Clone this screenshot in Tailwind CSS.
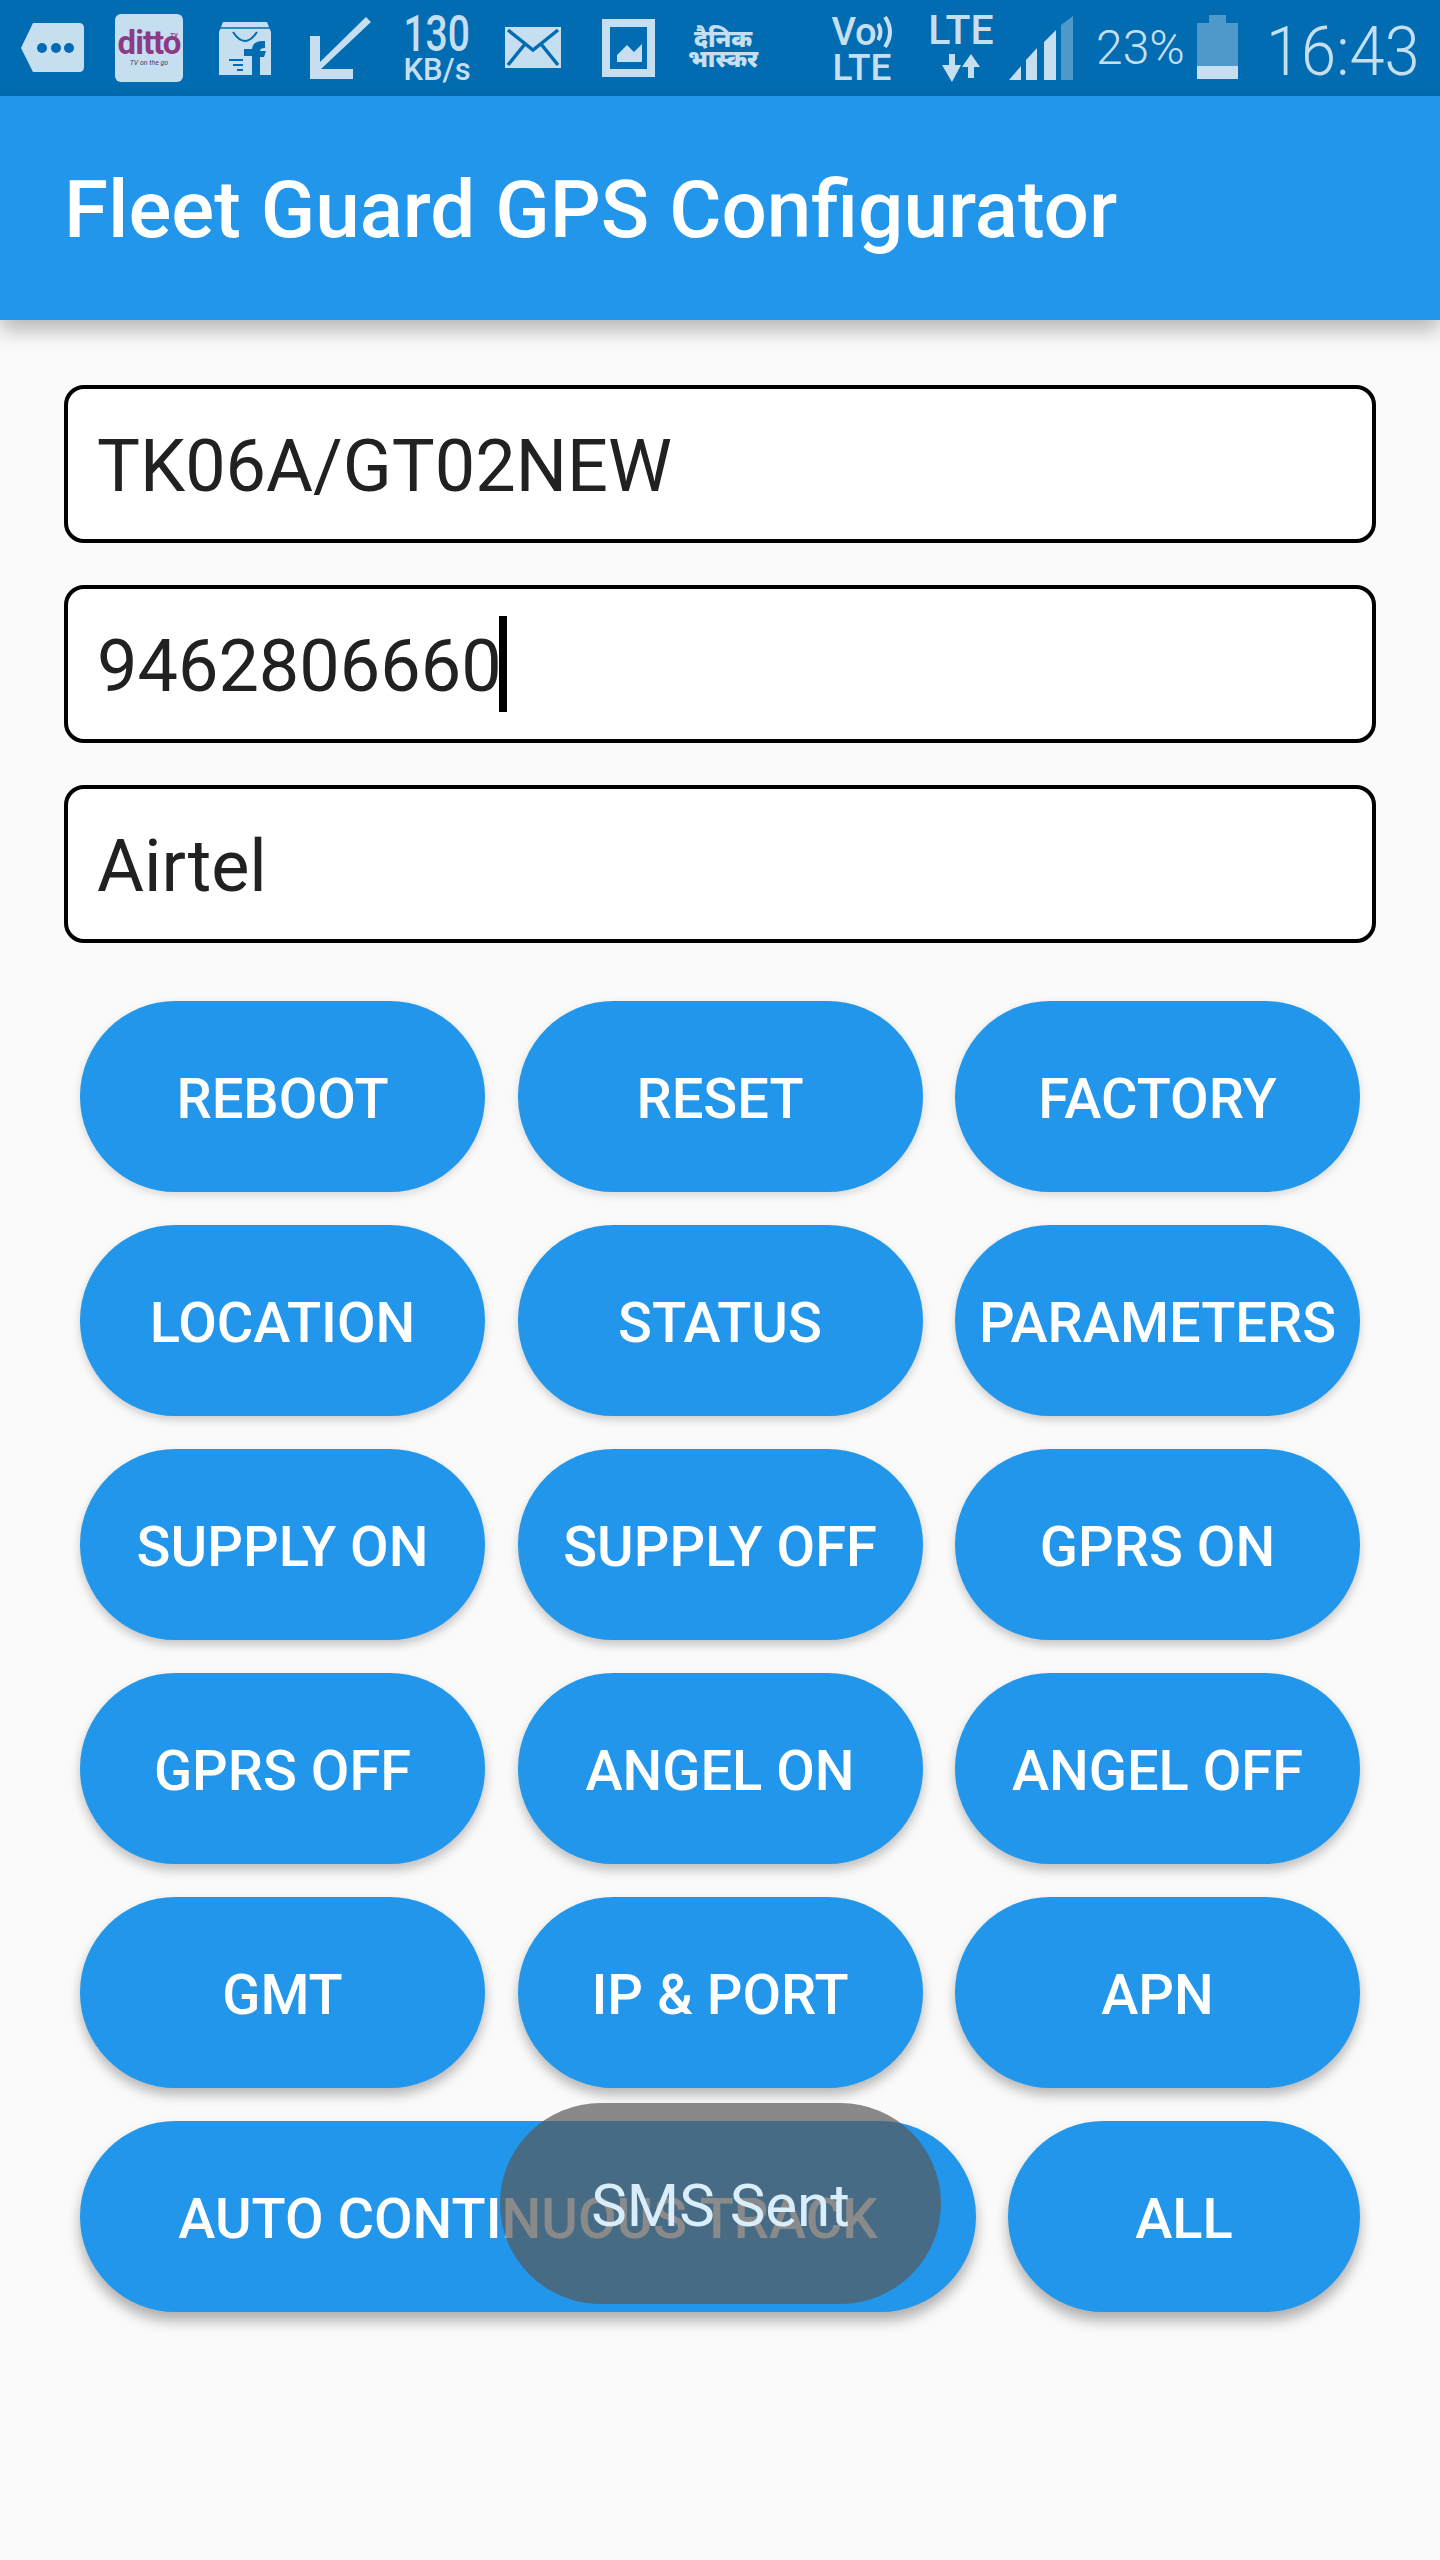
<!doctype html>
<html>
<head>
<meta charset="utf-8">
<script src="https://cdn.jsdelivr.net/npm/@tailwindcss/browser@4"></script>
</head>
<body>
<div class="relative w-[1440px] h-[2560px] overflow-hidden bg-[#fafafa] [font-family:Roboto,sans-serif]">

  <!-- status bar -->
  <div class="flex h-[96px] bg-[#016cb1] text-[#c6dff0]">
    <svg class="ml-[21px] mt-[23px] w-[63px] h-[49px]" viewBox="0 0 63 49"><path d="M12 0H58Q63 0 63 5V44Q63 49 58 49H12L0 25Z" fill="#c6dff0"/><circle cx="21" cy="25" r="5" fill="#016cb1"/><circle cx="35" cy="25" r="5" fill="#016cb1"/><circle cx="48" cy="25" r="5" fill="#016cb1"/></svg>
    <div class="relative ml-[31px] mt-[14px] w-[68px] h-[68px] rounded-[6px] bg-[#c6dff0] flex flex-col items-center pt-[13px]">
      <span class="text-[33px] leading-[32px] font-bold text-[#8d3a86] tracking-[-1px]">ditto</span>
      <span class="absolute right-[5px] top-[18px] text-[6px] leading-[6px] font-bold text-[#8d3a86]">TV</span>
      <span class="text-[7px] leading-[8px] italic text-[#4a3a5a]">TV on the go</span>
    </div>
    <svg class="ml-[36px] mt-[22px] w-[52px] h-[53px]" viewBox="0 0 52 53"><path d="M4 0H48L52 10V53H0V10Z" fill="#c6dff0"/><path d="M0 6H52" stroke="#016cb1" stroke-width="1.5"/><path d="M14 10Q26 28 38 10" fill="none" stroke="#016cb1" stroke-width="2"/><path d="M33 53V34H25V27H33Q34 18 46 19V26Q41 26 41 29H47L45 35H41V53Z" fill="#016cb1"/><path d="M10 38H24M14 43H24M18 48H24" stroke="#016cb1" stroke-width="2"/></svg>
    <svg class="ml-[39px] mt-[17px] w-[61px] h-[62px]" viewBox="0 0 61 62"><path d="M56 0L61 5L11 52H43V62H0V19H10V45Z" fill="#c6dff0"/></svg>
    <div class="ml-[33px] mt-[12px] w-[66px] flex flex-col items-center">
      <span class="text-[50px] leading-[44px] font-medium [transform:scaleX(.78)]">130</span>
      <span class="text-[31px] leading-[28px] font-medium">KB/s</span>
    </div>
    <svg class="ml-[35px] mt-[27px] w-[56px] h-[41px]" viewBox="0 0 56 41"><rect width="56" height="41" fill="#c6dff0"/><path d="M3 3L28 23L53 3M3 38L20 17M53 38L36 17" fill="none" stroke="#016cb1" stroke-width="3.5"/></svg>
    <svg class="ml-[41px] mt-[19px] w-[53px] h-[58px]" viewBox="0 0 53 58"><path fill-rule="evenodd" d="M0 0H53V58H0ZM8 8V50H45V8Z" fill="#c6dff0"/><path d="M15 43V36L25 26L32 33L40 25V43Z" fill="#c6dff0"/></svg>
    <div class="ml-[34px] mt-[28px] w-[68px] flex flex-col items-center text-[24px] leading-[20px] font-black [font-family:'Noto_Sans',sans-serif]"><span>दैनिक</span><span>भास्कर</span></div>
    <div class="ml-[73px] mt-[13px] w-[64px] flex flex-col items-center font-medium">
      <div class="flex items-center h-[37px]"><span class="text-[38px] leading-[36px]">Vo</span><svg class="w-[16px] h-[32px]" viewBox="0 0 16 32"><path d="M1 8Q6 16 1 24M8 1Q18 16 8 31" fill="none" stroke="#c6dff0" stroke-width="4"/></svg></div>
      <span class="text-[37px] leading-[32px] mt-[2px]">LTE</span>
    </div>
    <div class="ml-[35px] mt-[12px] w-[64px] flex flex-col items-center">
      <span class="text-[41px] leading-[36px] font-medium">LTE</span>
      <svg class="mt-[6px] w-[38px] h-[28px]" viewBox="0 0 38 28"><path d="M7 0H13V11H19L10 28L0 11H7Z M29 0L38 13H32V24H26V13H20Z" fill="#c6dff0"/></svg>
    </div>
    <svg class="ml-[16px] mt-[16px] w-[65px] h-[64px]" viewBox="0 0 65 64"><path d="M0 64L12 50V64ZM17 64V44L28 32V64ZM35 64V26L47 14V64Z" fill="#c6dff0"/><path d="M52 64V9L64 0V64Z" fill="#4f98ca"/></svg>
    <span class="ml-[22px] mt-[24px] w-[95px] text-[48px] leading-[48px] font-light">23%</span>
    <div class="ml-[6px] mt-[15px] w-[41px] h-[64px] flex flex-col items-center">
      <div class="w-[17px] h-[8px] bg-[#4f98ca]"></div>
      <div class="w-[41px] h-[43px] bg-[#4f98ca]"></div>
      <div class="w-[41px] h-[13px] bg-[#c6dff0]"></div>
    </div>
    <span class="ml-[28px] mt-[18px] text-[68px] leading-[68px] font-light whitespace-nowrap origin-left [transform:scaleX(.93)]">16:43</span>
  </div>

  <!-- app bar -->
  <div class="relative z-10 flex items-center h-[224px] pl-[64px] pt-[4px] bg-[#2196ea] shadow-[0_10px_20px_rgba(0,0,0,0.28)]">
    <h1 class="text-[80px] font-medium text-white whitespace-nowrap">Fleet Guard GPS Configurator</h1>
  </div>

  <!-- fields -->
  <div class="flex flex-col gap-[42px] px-[64px] pt-[65px] text-[72px] text-[#212121]">
    <div class="flex items-center h-[158px] pl-[29px] pt-[5px] bg-white border-[4px] border-black rounded-[20px]">TK06A/GT02NEW</div>
    <div class="flex items-center h-[158px] pl-[29px] pt-[5px] bg-white border-[4px] border-black rounded-[20px]">9462806660<span class="w-[8px] h-[96px] -mt-[5px] -ml-[3px] bg-black"></span></div>
    <div class="flex items-center h-[158px] pl-[29px] pt-[5px] bg-white border-[4px] border-black rounded-[20px]">Airtel</div>
  </div>

  <!-- commands -->
  <div class="grid grid-cols-[405px_405px_405px] gap-y-[33px] gap-x-[32.5px] px-[80px] mt-[58px] text-[56px] font-medium text-white">
    <button class="h-[191px] pt-[5px] rounded-full bg-[#2196ea] whitespace-nowrap shadow-[0_3px_8px_rgba(0,0,0,0.14)]">REBOOT</button>
    <button class="h-[191px] pt-[5px] rounded-full bg-[#2196ea] whitespace-nowrap shadow-[0_3px_8px_rgba(0,0,0,0.14)]">RESET</button>
    <button class="h-[191px] pt-[5px] rounded-full bg-[#2196ea] whitespace-nowrap shadow-[0_3px_8px_rgba(0,0,0,0.14)]">FACTORY</button>
    <button class="h-[191px] pt-[5px] rounded-full bg-[#2196ea] whitespace-nowrap shadow-[0_4px_9px_rgba(0,0,0,0.18)]">LOCATION</button>
    <button class="h-[191px] pt-[5px] rounded-full bg-[#2196ea] whitespace-nowrap shadow-[0_4px_9px_rgba(0,0,0,0.18)]">STATUS</button>
    <button class="h-[191px] pt-[5px] rounded-full bg-[#2196ea] whitespace-nowrap shadow-[0_4px_9px_rgba(0,0,0,0.18)]">PARAMETERS</button>
    <button class="h-[191px] pt-[5px] rounded-full bg-[#2196ea] whitespace-nowrap shadow-[0_5px_10px_rgba(0,0,0,0.21)]">SUPPLY ON</button>
    <button class="h-[191px] pt-[5px] rounded-full bg-[#2196ea] whitespace-nowrap shadow-[0_5px_10px_rgba(0,0,0,0.21)]">SUPPLY OFF</button>
    <button class="h-[191px] pt-[5px] rounded-full bg-[#2196ea] whitespace-nowrap shadow-[0_5px_10px_rgba(0,0,0,0.21)]">GPRS ON</button>
    <button class="h-[191px] pt-[5px] rounded-full bg-[#2196ea] whitespace-nowrap shadow-[0_6px_11px_rgba(0,0,0,0.24)]">GPRS OFF</button>
    <button class="h-[191px] pt-[5px] rounded-full bg-[#2196ea] whitespace-nowrap shadow-[0_6px_11px_rgba(0,0,0,0.24)]">ANGEL ON</button>
    <button class="h-[191px] pt-[5px] rounded-full bg-[#2196ea] whitespace-nowrap shadow-[0_6px_11px_rgba(0,0,0,0.24)]">ANGEL OFF</button>
    <button class="h-[191px] pt-[5px] rounded-full bg-[#2196ea] whitespace-nowrap shadow-[0_7px_12px_rgba(0,0,0,0.27)]">GMT</button>
    <button class="h-[191px] pt-[5px] rounded-full bg-[#2196ea] whitespace-nowrap shadow-[0_7px_12px_rgba(0,0,0,0.27)]">IP &amp; PORT</button>
    <button class="h-[191px] pt-[5px] rounded-full bg-[#2196ea] whitespace-nowrap shadow-[0_7px_12px_rgba(0,0,0,0.27)]">APN</button>
    <div class="col-span-3 flex gap-[32px]">
      <button class="w-[896px] h-[191px] pt-[5px] rounded-full bg-[#2196ea] whitespace-nowrap shadow-[0_9px_13px_rgba(0,0,0,0.3)]">AUTO CONTINUOUS TRACK</button>
      <button class="w-[352px] h-[191px] pt-[5px] rounded-full bg-[#2196ea] whitespace-nowrap shadow-[0_9px_13px_rgba(0,0,0,0.3)]">ALL</button>
    </div>
  </div>

  <!-- toast -->
  <div class="absolute left-[500px] top-[2103px] flex items-center justify-center w-[441px] h-[201px] pt-[4px] rounded-full bg-[#585858]/70 text-[60px] text-[#d9edfb]">SMS Sent</div>
</div>
</body>
</html>
